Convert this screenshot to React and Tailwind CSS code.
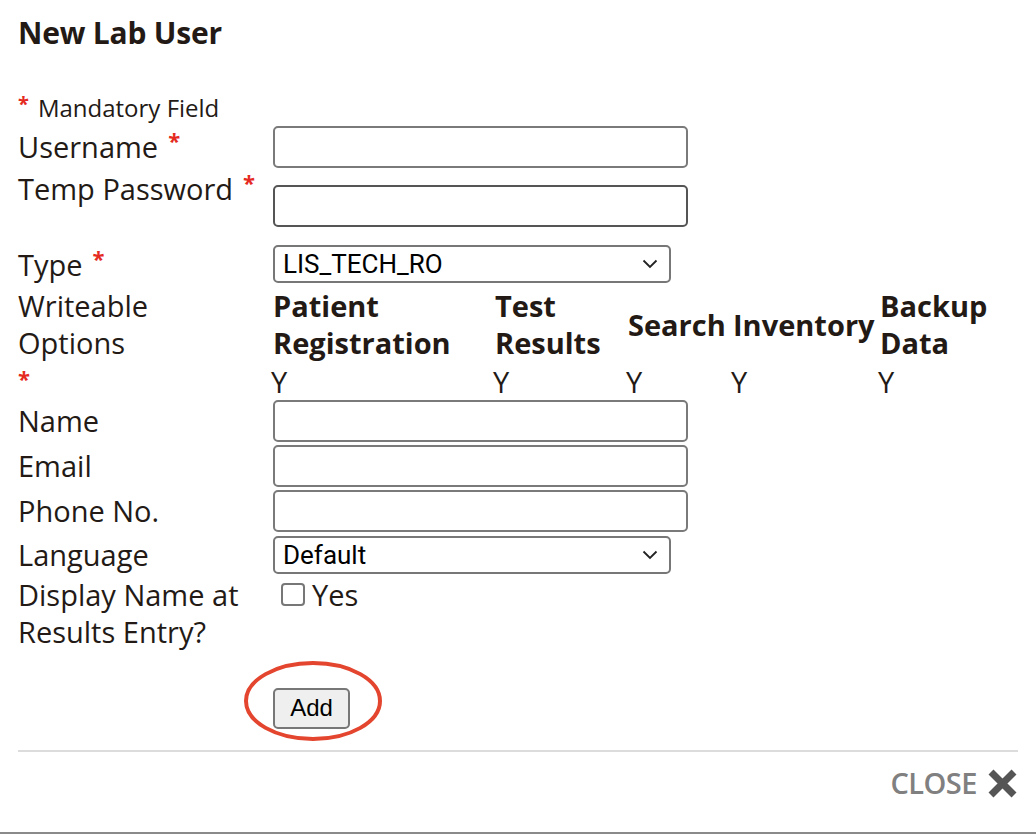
import { useState } from 'react';

const font = { fontFamily: '"Open Sans", "Noto Sans", sans-serif' };

function Req() {
  return <span className="inline-block text-[#e52b1f] text-[22px] font-bold leading-none align-[9px] ml-[10px]">*</span>;
}

function TextInput({ dark }) {
  return (
    <input
      type="text"
      className={`w-[415px] h-[42px] border-2 rounded-[5px] bg-white px-2 outline-none ${dark ? 'border-[#555]' : 'border-[#7a7a7a]'}`}
    />
  );
}

function Select({ value }) {
  return (
    <div className="relative w-[398px] h-[38px] border-2 border-[#777] rounded-[5px] bg-white flex items-center pl-[8px]">
      <span className="text-[26px] text-black" style={{ fontFamily: 'Roboto, "Liberation Sans", sans-serif' }}>{value}</span>
      <svg className="absolute right-[11px] top-[12px]" width="16" height="10" viewBox="0 0 16 10" fill="none">
        <path d="M1.5 1.5 L8 8 L14.5 1.5" stroke="#222" strokeWidth="1.8" />
      </svg>
    </div>
  );
}

export default function App() {
  const [checked, setChecked] = useState(false);
  const cols = [
    { label: ['Patient', 'Registration'], w: 'w-[222px]' },
    { label: ['Test', 'Results'], w: 'w-[133px]' },
    { label: ['Search'], w: 'w-[105px]' },
    { label: ['Inventory'], w: 'w-[147px]' },
    { label: ['Backup', 'Data'], w: 'w-[140px]' },
  ];

  return (
    <div className="relative w-[1036px] h-[834px] bg-white text-[#231a16] border-b-2 border-[#8a8a8a] px-[18px]" style={font}>
      {/* Title */}
      <div className="pt-[15px] text-[30px] leading-[36px] font-bold tracking-[-0.2px]">New Lab User</div>

      {/* Mandatory note */}
      <div className="mt-[42px] text-[24px] leading-[30px]">
        <span className="inline-block text-[#e52b1f] text-[20px] font-bold leading-none align-[6px] mr-[9px]">*</span>Mandatory Field
      </div>

      <div className="mt-[3px] text-[29px]">
        {/* Username */}
        <div className="flex h-[42px]">
          <div className="w-[255px] leading-[42px]">Username<Req /></div>
          <TextInput />
        </div>

        {/* Temp password */}
        <div className="flex h-[76px] mt-[1px]">
          <div className="w-[255px] leading-[40px]">Temp Password<Req /></div>
          <div className="pt-[15px]"><TextInput dark /></div>
        </div>

        {/* Type */}
        <div className="flex h-[42px]">
          <div className="w-[255px] leading-[40px]">Type<Req /></div>
          <Select value="LIS_TECH_RO" />
        </div>

        {/* Writeable options */}
        <div className="flex leading-[37px] h-[113px]">
          <div className="w-[255px]">
            <div>Writeable</div>
            <div>Options</div>
            <div className="text-[#e52b1f] text-[22px] font-bold leading-none pt-[6px]">*</div>
          </div>
          <div className="flex">
            {cols.map((c) => (
              <div key={c.label.join(' ')} className={`${c.w} flex flex-col`}>
                <div className="h-[74px] flex flex-col justify-center font-bold pl-[2px] whitespace-nowrap">
                  {c.label.map((l) => <div key={l}>{l}</div>)}
                </div>
                <div className="h-[37px] pt-[2px]">Y</div>
              </div>
            ))}
          </div>
        </div>

        {/* Name / Email / Phone */}
        {['Name', 'Email', 'Phone No.'].map((l) => (
          <div key={l} className="flex h-[42px] mb-[3px]">
            <div className="w-[255px] leading-[42px]">{l}</div>
            <TextInput />
          </div>
        ))}

        {/* Language */}
        <div className="flex h-[40px] items-center">
          <div className="w-[255px] leading-[40px]">Language</div>
          <Select value="Default" />
        </div>

        {/* Display name */}
        <div className="flex leading-[37px] mt-[1px]">
          <div className="w-[255px]">Display Name at<br />Results Entry?</div>
          <label className="flex items-start gap-[7px] pl-[8px] cursor-pointer">
            <input
              type="checkbox"
              checked={checked}
              onChange={(e) => setChecked(e.target.checked)}
              className="appearance-none shrink-0 mt-[7px] w-[24px] h-[23px] border-2 border-[#777] rounded-[4px] bg-white checked:bg-[#2563eb]"
            />
            <span>Yes</span>
          </label>
        </div>

        {/* Add button */}
        <div className="relative mt-[33px] pl-[255px] h-[41px]">
          <button
            className="w-[77px] h-[41px] bg-[#efefef] border-2 border-[#777] rounded-[5px] text-[24px] text-black"
            style={{ fontFamily: '"Liberation Sans", Arial, sans-serif' }}
          >
            Add
          </button>
          <svg className="absolute left-[224px] top-[-25px] pointer-events-none" width="142" height="86" viewBox="0 0 142 86" fill="none">
            <ellipse cx="71" cy="43" rx="67" ry="38" stroke="#e4452e" strokeWidth="4" />
          </svg>
        </div>
      </div>

      {/* Footer */}
      <div className="mt-[26px] border-t-2 border-[#dcdcdc]" />
      <div className="flex justify-end items-center pt-[14px] gap-[10px]">
        <span className="text-[29px] leading-[34px] font-semibold tracking-[-0.5px] text-[#808080]">CLOSE</span>
        <svg width="31" height="31" viewBox="0 0 31 31">
          <path d="M4 4 L27 27 M27 4 L4 27" stroke="#555" strokeWidth="7" />
        </svg>
      </div>
    </div>
  );
}
